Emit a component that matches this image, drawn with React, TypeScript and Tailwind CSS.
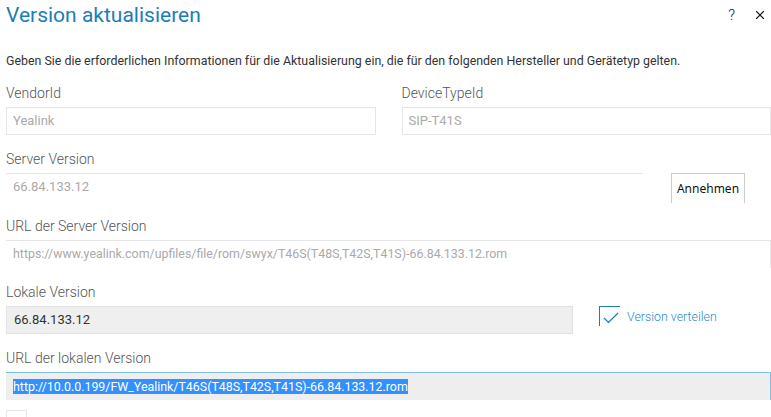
import { X } from 'lucide-react';

const font = { fontFamily: 'Roboto, "Noto Sans", sans-serif' };

const Label = ({ children }: { children: React.ReactNode }) => (
  <div className="h-5 mb-[4px] text-[14px] leading-5 font-light text-[#555]">{children}</div>
);

export default function App() {
  return (
    <div className="w-[771px] h-[417px] overflow-hidden bg-white text-[#333]" style={font}>
      <div className="flex items-start justify-between pl-[6px] pr-[4px] pt-[1px]">
        <h1 className="text-[21px] leading-[28px] text-[#1b7db8]">Version aktualisieren</h1>
        <div className="flex items-center gap-[18px] pt-[3px] text-[#222]">
          <span className="text-[15px] font-light">?</span>
          <X className="w-[14px] h-[14px]" strokeWidth={2} />
        </div>
      </div>

      <div className="pl-[6px]">
        <p className="mt-[24px] text-[12.4px] leading-4 text-[#333]">
          Geben Sie die erforderlichen Informationen für die Aktualisierung ein, die für den folgenden Hersteller und Gerätetyp gelten.
        </p>

        {/* vendor / device type */}
        <div className="mt-[14px] grid grid-cols-2 gap-x-[26px] w-[765px]">
          <div>
            <Label>VendorId</Label>
            <div className="h-[28px] border border-[#e6e6e6] px-[6px] text-[13px] leading-[26px] text-[#aaa]">Yealink</div>
          </div>
          <div>
            <Label>DeviceTypeId</Label>
            <div className="h-[28px] border border-[#e6e6e6] px-[6px] text-[13px] leading-[26px] text-[#aaa]">SIP-T41S</div>
          </div>
        </div>

        {/* server version */}
        <div className="mt-[14px]">
          <Label>Server Version</Label>
          <div className="flex items-start">
            <div className="w-[637px] h-[28px] border-t border-[#e6e6e6] px-[7px] text-[13px] leading-[26px] text-[#aaa]">66.84.133.12</div>
            <button
              className="ml-[28px] w-[74px] h-[30px] border-x border-t border-[#ccc] bg-white text-[12px] text-[#111]"
              style={{ fontFamily: '"Noto Sans", "Open Sans", sans-serif' }}
            >
              Annehmen
            </button>
          </div>
        </div>

        {/* server url */}
        <div className="mt-[13px]">
          <Label>URL der Server Version</Label>
          <div className="w-[765px] h-[28px] border-t border-r border-[#e6e6e6] px-[7px] text-[12.4px] leading-[26px] text-[#aaa]">
            https://www.yealink.com/upfiles/file/rom/swyx/T46S(T48S,T42S,T41S)-66.84.133.12.rom
          </div>
        </div>

        {/* local version */}
        <div className="mt-[14px]">
          <Label>Lokale Version</Label>
          <div className="flex items-start">
            <div className="w-[567px] h-[28px] border border-[#e2e2e2] bg-[#efefef] px-[7px] text-[13px] leading-[26px] text-[#333]">66.84.133.12</div>
            <label className="ml-[26px] flex items-center gap-[7px]">
              <span className="w-[21px] h-[20px] border-t border-l border-[#1b7db8] flex items-center justify-center">
                <svg width="16" height="12" viewBox="0 0 16 12" className="mt-[2px] ml-[2px]">
                  <path d="M1 6 L5.5 10.5 L15 1" fill="none" stroke="#1b7db8" strokeWidth="1.2" />
                </svg>
              </span>
              <span className="text-[12.4px] font-light text-[#2b8ac4] mt-[2px]">Version verteilen</span>
            </label>
          </div>
        </div>

        {/* local url */}
        <div className="mt-[14px]">
          <Label>URL der lokalen Version</Label>
          <div className="w-[765px] h-[28px] border-t border-r border-[#7bbfe6] bg-[#eeeeee] px-[7px] text-[12.4px] leading-[27px] text-[#333]">
            <span className="bg-[#3390ff] text-white">http://10.0.0.199/FW_Yealink/T46S(T48S,T42S,T41S)-66.84.133.12.rom</span>
          </div>
        </div>

        <div className="mt-[10px] w-[21px] h-[8px] border-t border-x border-[#e6e6e6]" />
      </div>
    </div>
  );
}
